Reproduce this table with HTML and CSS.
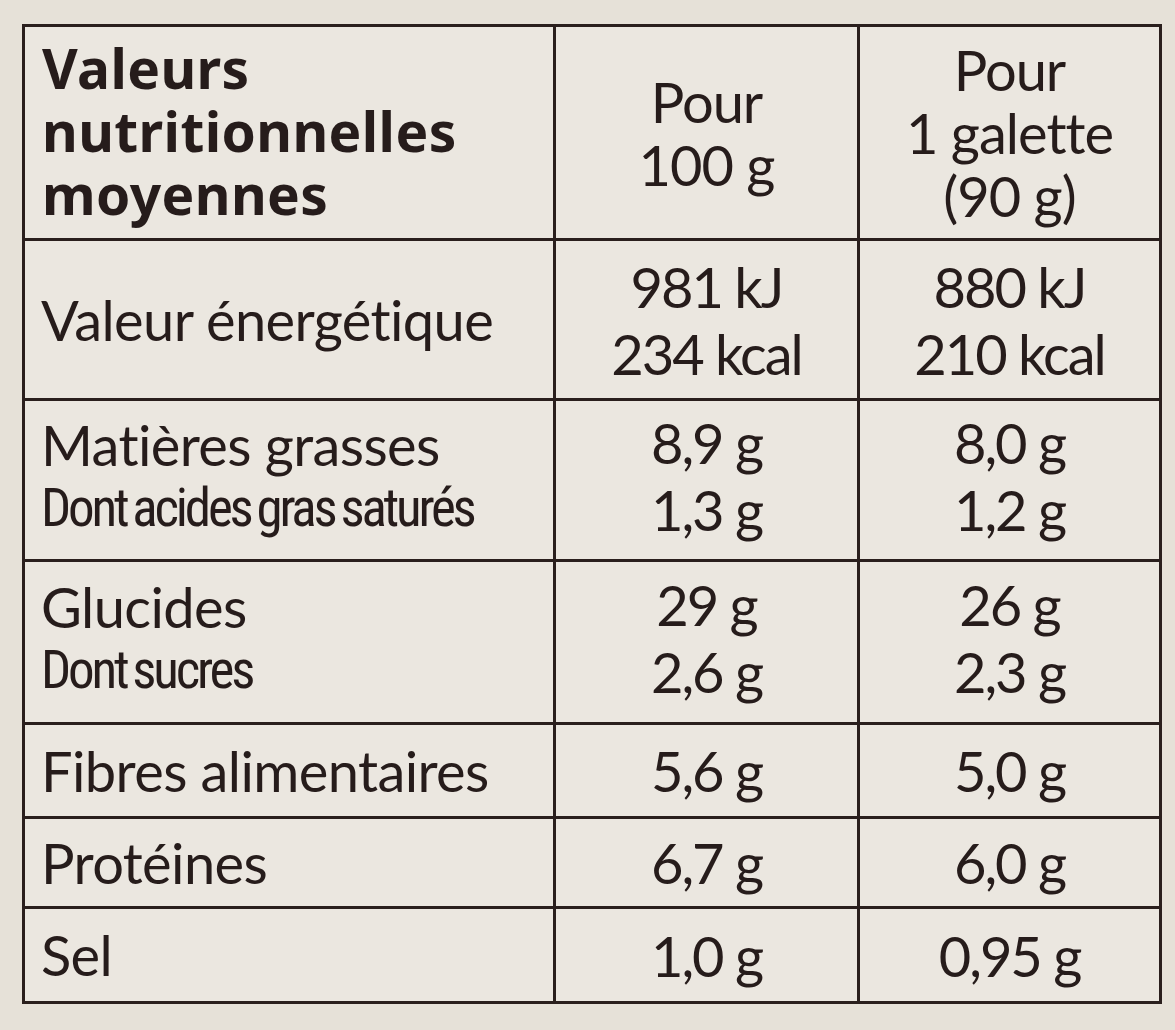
FILE: index.html
```html
<!DOCTYPE html>
<html lang="fr">
<head>
<meta charset="utf-8">
<title>Valeurs nutritionnelles</title>
<link rel="stylesheet" href="styles.css">
</head>
<body>
<table class="nutri">
  <colgroup>
    <col class="c-label">
    <col class="c-val">
    <col class="c-val2">
  </colgroup>
  <tr class="r-head">
    <th class="head-label">Valeurs<br>nutritionnelles<br>moyennes</th>
    <th class="head-val">Pour<br>100 g</th>
    <th class="head-val">Pour<br>1 galette<br>(90 g)</th>
  </tr>
  <tr class="r-energy">
    <td class="label">Valeur énergétique</td>
    <td class="val"><div>981 kJ</div><div>234 kcal</div></td>
    <td class="val"><div>880 kJ</div><div>210 kcal</div></td>
  </tr>
  <tr class="r-fat">
    <td class="label"><div class="main">Matières grasses</div><div class="sub">Dont acides gras saturés</div></td>
    <td class="val"><div>8,9 g</div><div>1,3 g</div></td>
    <td class="val"><div>8,0 g</div><div>1,2 g</div></td>
  </tr>
  <tr class="r-carb">
    <td class="label"><div class="main">Glucides</div><div class="sub">Dont sucres</div></td>
    <td class="val"><div>29 g</div><div>2,6 g</div></td>
    <td class="val"><div>26 g</div><div>2,3 g</div></td>
  </tr>
  <tr class="r-fibre">
    <td class="label">Fibres alimentaires</td>
    <td class="val">5,6 g</td>
    <td class="val">5,0 g</td>
  </tr>
  <tr class="r-prot">
    <td class="label">Protéines</td>
    <td class="val">6,7 g</td>
    <td class="val">6,0 g</td>
  </tr>
  <tr class="r-salt">
    <td class="label">Sel</td>
    <td class="val">1,0 g</td>
    <td class="val">0,95 g</td>
  </tr>
</table>
</body>
</html>
```
FILE: styles.css
```css
html, body {
  margin: 0;
  padding: 0;
  background: #e6e1d8;
}
body {
  padding: 24px 0 0 22px;
  font-family: Lato, "Noto Sans", sans-serif;
  color: #261c1b;
}
.nutri {
  border-collapse: collapse;
  table-layout: fixed;
  width: 1137px;
  background: #ebe7e0;
}
.c-label { width: 531px; }
.c-val { width: 304px; }
.c-val2 { width: 302px; }
.nutri th,
.nutri td {
  border: 3px solid #2a1f1d;
  padding: 0;
  vertical-align: middle;
}
.nutri .head-label {
  text-align: left;
  padding: 0 0 4px 17px;
  font-family: "Noto Sans", Lato, sans-serif;
  font-weight: 700;
  font-size: 55px;
  line-height: 63px;
  letter-spacing: 0.4px;
}
.nutri .head-val {
  font-weight: 400;
  font-size: 56px;
  line-height: 63px;
  text-align: center;
  letter-spacing: -1px;
}
.nutri .label {
  text-align: left;
  padding-left: 16px;
  font-size: 56px;
  line-height: 64px;
  letter-spacing: -0.6px;
}
.nutri .r-fat .label,
.nutri .r-carb .label,
.nutri .r-fat .val,
.nutri .r-carb .val {
  padding-bottom: 8px;
}
.label .sub {
  font-family: "Roboto Condensed", Lato, sans-serif;
  font-size: 53px;
  line-height: 62px;
  letter-spacing: -3.2px;
  word-spacing: -3px;
}
.nutri .val {
  text-align: center;
  font-size: 56px;
  line-height: 67px;
  letter-spacing: -2px;
}
.r-head { height: 214px; }
.r-energy { height: 160px; }
.r-fat { height: 161px; }
.r-carb { height: 163px; }
.r-fibre { height: 94px; }
.r-prot { height: 90px; }
.r-salt { height: 95px; }
```
